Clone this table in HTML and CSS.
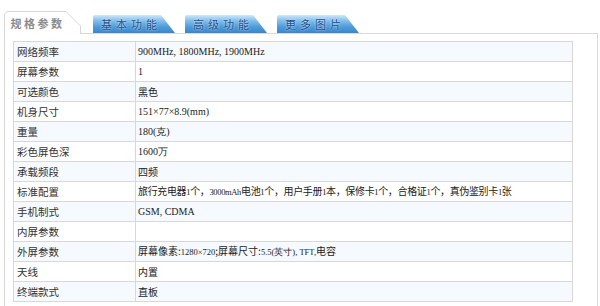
FILE: index.html
```html
<!DOCTYPE html>
<html lang="zh">
<head>
<meta charset="utf-8">
<link rel="stylesheet" href="styles.css">
</head>
<body>
<div class="wrap">
  <div class="tabs">
    <div class="tab active">
      <svg class="tab-bg" width="77" height="23" viewBox="0 0 77 23"><path d="M0.5 23 V5 Q0.5 0.5 5 0.5 H62 L76.5 15 V23" fill="#fff" stroke="#d6d6d6"/></svg>
      <span class="tab-label">规格参数</span>
    </div>
    <div class="tab blue"><span class="tab-label">基本功能</span></div>
    <div class="tab blue"><span class="tab-label">高级功能</span></div>
    <div class="tab blue"><span class="tab-label">更多图片</span></div>
  </div>
  <div class="panel">
    <table class="spec">
      <tr><td class="k">网络频率</td><td class="v sm">900MHz, 1800MHz, 1900MHz</td></tr>
      <tr><td class="k">屏幕参数</td><td class="v sm">1</td></tr>
      <tr><td class="k">可选颜色</td><td class="v">黑色</td></tr>
      <tr><td class="k">机身尺寸</td><td class="v sm">151×77×8.9(mm)</td></tr>
      <tr><td class="k">重量</td><td class="v sm">180(克)</td></tr>
      <tr><td class="k">彩色屏色深</td><td class="v sm">1600万</td></tr>
      <tr><td class="k">承载频段</td><td class="v">四频</td></tr>
      <tr><td class="k">标准配置</td><td class="v tight">旅行充电器<span class="sm">1</span>个，<span class="sm">3000mAh</span>电池<span class="sm">1</span>个，用户手册<span class="sm">1</span>本，保修卡<span class="sm">1</span>个，合格证<span class="sm">1</span>个，真伪鉴别卡<span class="sm">1</span>张</td></tr>
      <tr><td class="k">手机制式</td><td class="v sm">GSM, CDMA</td></tr>
      <tr><td class="k">内屏参数</td><td class="v"></td></tr>
      <tr><td class="k">外屏参数</td><td class="v">屏幕像素:<span class="sm">1280×720</span>;屏幕尺寸:<span class="sm">5.5(英寸), TFT,</span>电容</td></tr>
      <tr><td class="k">天线</td><td class="v">内置</td></tr>
      <tr><td class="k">终端款式</td><td class="v">直板</td></tr>
    </table>
  </div>
</div>
</body>
</html>
```
FILE: styles.css
```css
html, body { margin: 0; padding: 0; background: #fff; }
body { font-family: "Noto Sans CJK SC", "DejaVu Sans", sans-serif; color: #222; }
.wrap { padding: 0 2px 0 4px; }
.tabs { display: flex; align-items: flex-end; height: 34px; gap: 10px; }
.tab { position: relative; display: flex; align-items: center; justify-content: center; }
.tab.active { width: 77px; height: 23px; margin-right: 2px; }
.tab-bg { position: absolute; left: 0; top: 0; }
.tab.active .tab-label { position: relative; font-size: 11px; font-weight: bold; color: #8c8c8c; letter-spacing: 2.5px; padding-right: 10px; padding-top: 1px; }
.tab.blue { width: 82px; height: 18px; margin-bottom: 1px;
  background: linear-gradient(to bottom, #cfe8fa 0%, #86c0ec 30%, #4f9cdb 65%, #3a86c8 100%);
  clip-path: polygon(0 0, 68px 0, 100% 100%, 0 100%);
  border-radius: 2px 0 0 0; }
.tab.blue .tab-label { font-size: 11px; color: #21508a; letter-spacing: 4px; padding-right: 6px; text-shadow: 0 0 2px #e8f4ff; }
.panel { border: 1px solid #d9d9d9; margin-top: -1px; padding: 7px 24px 10px 8px; }
.spec { width: 560px; border-collapse: collapse; table-layout: fixed; }
.spec td { border: 1px solid #d8d8d8; height: 19px; padding: 0 0 0 3px; font-size: 10px; line-height: 18px; white-space: nowrap; overflow: hidden; }
.spec td.k { width: 118px; color: #333; font-size: 10.5px; }
.spec td.v { color: #222; padding-left: 2px; }
.spec td.tight { letter-spacing: -0.35px; }
.spec tr:nth-child(odd) td { background: #f6f9fd; }
.sm { font-family: "Liberation Serif", "DejaVu Serif", serif; font-size: 8.5px; }
```
